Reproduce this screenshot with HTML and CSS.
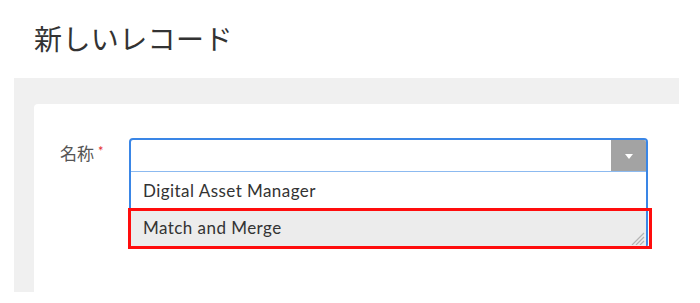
FILE: index.html
```html
<!DOCTYPE html>
<html lang="ja">
<head>
<meta charset="utf-8">
<title>新しいレコード</title>
<link rel="stylesheet" href="styles.css">
</head>
<body>
<header class="page-header">
  <h1 class="page-title">新しいレコード</h1>
</header>
<section class="panel">
  <div class="card">
    <div class="form-row">
      <label class="field-label">名称<span class="required">*</span></label>
      <div class="combo">
        <div class="combo-input">
          <div class="combo-text"></div>
          <div class="combo-button"><span class="caret"></span></div>
        </div>
        <ul class="combo-list">
          <li class="combo-item">Digital Asset Manager</li>
          <li class="combo-item combo-item-active">Match and Merge</li>
        </ul>
        <svg class="resize-grip" width="16" height="14" viewBox="0 0 16 14">
          <path d="M3 14 L15 2 M7 14 L15 6 M11 14 L15 10" stroke="#b4b4b4" stroke-width="1.2" fill="none"/>
        </svg>
        <div class="highlight"></div>
      </div>
    </div>
  </div>
</section>
</body>
</html>
```

FILE: styles.css
```css
* { box-sizing: border-box; }

html, body {
  margin: 0;
  padding: 0;
  background: #ffffff;
}

body {
  font-family: Lato, "Noto Sans CJK JP", sans-serif;
  color: #333333;
  width: 700px;
  height: 303px;
  overflow: hidden;
}

.page-header {
  height: 78px;
  padding: 18px 0 0 34px;
}

.page-title {
  margin: 0;
  font-family: "Noto Sans CJK JP", sans-serif;
  font-weight: 400;
  font-size: 28px;
  line-height: 40px;
  color: #333333;
  letter-spacing: 0.4px;
}

.panel {
  margin-left: 14px;
  width: 665px;
  height: 214px;
  background: #f0f0f0;
  padding: 26px 0 0 20px;
}

.card {
  background: #ffffff;
  height: 188px;
  border-radius: 4px 0 0 0;
  padding: 34px 0 0 26px;
}

.form-row {
  display: grid;
  grid-template-columns: 69px 519px;
  align-items: start;
}

.field-label {
  font-family: "Noto Sans CJK JP", sans-serif;
  font-size: 17px;
  line-height: 24px;
  padding-top: 3px;
  color: #555555;
  display: flex;
  align-items: flex-start;
}

.required {
  color: #e3262b;
  font-family: Lato, sans-serif;
  font-size: 13px;
  line-height: 16px;
  margin-left: 4px;
  margin-top: 2px;
}

.combo {
  position: relative;
  border: 2px solid #3a86e6;
  border-radius: 4px;
  background: #ffffff;
}

.combo-input {
  display: flex;
  height: 32px;
  border-bottom: 1px solid #8cbaf0;
}

.combo-text {
  flex: 1;
}

.combo-button {
  width: 35px;
  height: 31px;
  background: #a3a3a3;
  border-top-right-radius: 2px;
  display: flex;
  align-items: center;
  justify-content: center;
}

.caret {
  width: 0;
  height: 0;
  border-left: 4.5px solid transparent;
  border-right: 4.5px solid transparent;
  border-top: 5px solid #ffffff;
  margin-top: 1px;
}

.combo-list {
  list-style: none;
  margin: 0;
  padding: 0;
}

.combo-item {
  height: 37px;
  line-height: 37px;
  padding-left: 12px;
  font-size: 17px;
  letter-spacing: 0.45px;
  color: #333333;
}

.combo-item-active {
  background: #ececec;
}

.resize-grip {
  position: absolute;
  right: 1px;
  bottom: 1px;
}

.highlight {
  position: absolute;
  left: -3px;
  top: 68px;
  width: 524px;
  height: 41px;
  border: 3px solid #ff0d0d;
  pointer-events: none;
}
```
